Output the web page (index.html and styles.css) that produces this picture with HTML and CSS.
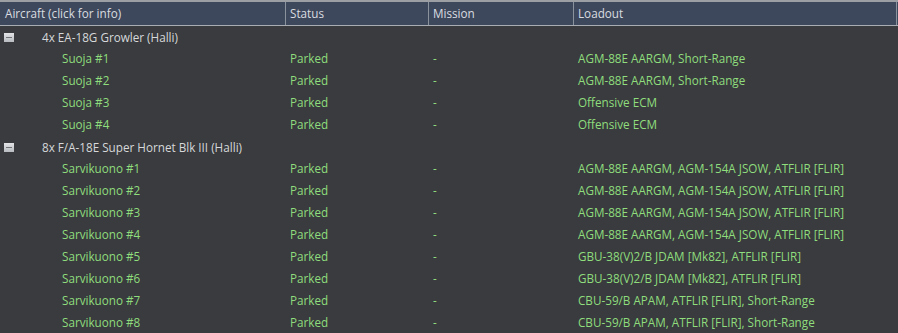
FILE: index.html
```html
<!DOCTYPE html>
<html>
<head>
<meta charset="utf-8">
<link rel="stylesheet" href="styles.css">
</head>
<body>
<div class="tree">
  <div class="header">
    <div class="hcell c1">Aircraft (click for info)</div>
    <div class="hcell c2">Status</div>
    <div class="hcell c3">Mission</div>
    <div class="hcell c4">Loadout</div>
  </div>
  <div class="row group">
    <div class="cell c1"><span class="toggle"></span><span class="glabel">4x EA-18G Growler (Halli)</span></div>
    <div class="cell c2"></div><div class="cell c3"></div><div class="cell c4"></div>
  </div>
  <div class="row item"><div class="cell c1 name">Suoja #1</div><div class="cell c2">Parked</div><div class="cell c3">-</div><div class="cell c4">AGM-88E AARGM, Short-Range</div></div>
  <div class="row item"><div class="cell c1 name">Suoja #2</div><div class="cell c2">Parked</div><div class="cell c3">-</div><div class="cell c4">AGM-88E AARGM, Short-Range</div></div>
  <div class="row item"><div class="cell c1 name">Suoja #3</div><div class="cell c2">Parked</div><div class="cell c3">-</div><div class="cell c4">Offensive ECM</div></div>
  <div class="row item"><div class="cell c1 name">Suoja #4</div><div class="cell c2">Parked</div><div class="cell c3">-</div><div class="cell c4">Offensive ECM</div></div>
  <div class="row group">
    <div class="cell c1"><span class="toggle"></span><span class="glabel">8x F/A-18E Super Hornet Blk III (Halli)</span></div>
    <div class="cell c2"></div><div class="cell c3"></div><div class="cell c4"></div>
  </div>
  <div class="row item"><div class="cell c1 name">Sarvikuono #1</div><div class="cell c2">Parked</div><div class="cell c3">-</div><div class="cell c4">AGM-88E AARGM, AGM-154A JSOW, ATFLIR [FLIR]</div></div>
  <div class="row item"><div class="cell c1 name">Sarvikuono #2</div><div class="cell c2">Parked</div><div class="cell c3">-</div><div class="cell c4">AGM-88E AARGM, AGM-154A JSOW, ATFLIR [FLIR]</div></div>
  <div class="row item"><div class="cell c1 name">Sarvikuono #3</div><div class="cell c2">Parked</div><div class="cell c3">-</div><div class="cell c4">AGM-88E AARGM, AGM-154A JSOW, ATFLIR [FLIR]</div></div>
  <div class="row item"><div class="cell c1 name">Sarvikuono #4</div><div class="cell c2">Parked</div><div class="cell c3">-</div><div class="cell c4">AGM-88E AARGM, AGM-154A JSOW, ATFLIR [FLIR]</div></div>
  <div class="row item"><div class="cell c1 name">Sarvikuono #5</div><div class="cell c2">Parked</div><div class="cell c3">-</div><div class="cell c4">GBU-38(V)2/B JDAM [Mk82], ATFLIR [FLIR]</div></div>
  <div class="row item"><div class="cell c1 name">Sarvikuono #6</div><div class="cell c2">Parked</div><div class="cell c3">-</div><div class="cell c4">GBU-38(V)2/B JDAM [Mk82], ATFLIR [FLIR]</div></div>
  <div class="row item"><div class="cell c1 name">Sarvikuono #7</div><div class="cell c2">Parked</div><div class="cell c3">-</div><div class="cell c4">CBU-59/B APAM, ATFLIR [FLIR], Short-Range</div></div>
  <div class="row item"><div class="cell c1 name">Sarvikuono #8</div><div class="cell c2">Parked</div><div class="cell c3">-</div><div class="cell c4">CBU-59/B APAM, ATFLIR [FLIR], Short-Range</div></div>
</div>
</body>
</html>
```

FILE: styles.css
```css
html, body {
  margin: 0;
  padding: 0;
  background: #393b3e;
  overflow: hidden;
}
.tree {
  width: 898px;
  height: 333px;
  font-family: "Open Sans", "Noto Sans", sans-serif;
  font-size: 11.7px;
  border-top: 2px solid #9c9fa4;
  box-sizing: border-box;
}
.header {
  display: grid;
  grid-template-columns: 286px 143px 145px 323px 1px;
  height: 23px;
  background: #3e485c;
  border-bottom: 1px solid #a9adb3;
  color: #d9dce0;
}
.hcell {
  padding-left: 5px;
  line-height: 22px;
  border-right: 1px solid #8a929e;
  white-space: nowrap;
  overflow: hidden;
}
.hcell.c2, .hcell.c3, .hcell.c4 {
  padding-left: 4px;
}
.row {
  display: grid;
  grid-template-columns: 286px 143px 145px 324px;
  height: 22px;
  line-height: 21px;
  white-space: nowrap;
}
.cell {
  overflow: hidden;
}
.cell.c2, .cell.c3, .cell.c4 {
  padding-left: 4px;
}
.group {
  color: #d6d8da;
}
.group .c1 {
  display: flex;
  align-items: center;
  padding-left: 4px;
}
.toggle {
  width: 10px;
  height: 9px;
  background: linear-gradient(#e2e3e5, #b9bcc0);
  position: relative;
  flex: none;
}
.toggle::after {
  content: "";
  position: absolute;
  left: 2px;
  top: 4px;
  width: 6px;
  height: 1px;
  background: #6f7378;
}
.glabel {
  margin-left: 28px;
}
.item {
  color: #8fdd7d;
}
.item .name {
  padding-left: 62px;
}
```
